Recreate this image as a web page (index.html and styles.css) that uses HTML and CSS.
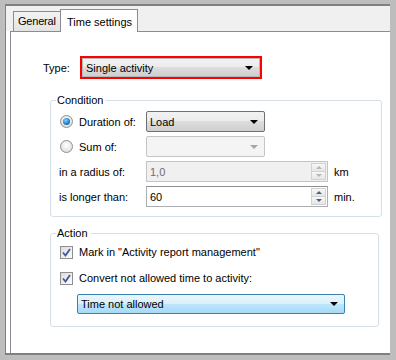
FILE: index.html
```html
<!DOCTYPE html>
<html lang="en">
<head>
    <meta charset="UTF-8">
    <title>Time settings</title>
    <link rel="stylesheet" href="styles.css">
</head>
<body>
    <div class="window">
        <div class="tabs">
            <div class="tab">General</div>
            <div class="tab active">Time settings</div>
        </div>
        <div class="panel">
            <div class="type-row">
                <span class="type-label">Type:</span>
                <div class="type-box">
                    <div class="combo type-combo">Single activity<span class="arrow"></span></div>
                </div>
            </div>

            <fieldset class="group condition">
                <legend>Condition</legend>
                <div class="cond-grid">
                    <label class="opt"><span class="radio on"></span>Duration of:</label>
                    <div class="combo small">Load<span class="arrow"></span></div>
                    <span></span>

                    <label class="opt"><span class="radio"></span>Sum of:</label>
                    <div class="combo small disabled"><span class="arrow"></span></div>
                    <span></span>

                    <span class="cap">in a radius of:</span>
                    <div class="spin disabled">1,0<span class="spin-btns"><span class="up"></span><span class="down"></span></span></div>
                    <span class="unit">km</span>

                    <span class="cap">is longer than:</span>
                    <div class="spin">60<span class="spin-btns"><span class="up"></span><span class="down"></span></span></div>
                    <span class="unit">min.</span>
                </div>
            </fieldset>

            <fieldset class="group action">
                <legend>Action</legend>
                <label class="check-row"><span class="check"><svg width="9" height="9" viewBox="0 0 9 9"><path d="M1 4.5 L3.5 7.5 L8 1" fill="none" stroke="#3f5a9a" stroke-width="1.8"/></svg></span>Mark in "Activity report management"</label>
                <label class="check-row"><span class="check"><svg width="9" height="9" viewBox="0 0 9 9"><path d="M1 4.5 L3.5 7.5 L8 1" fill="none" stroke="#3f5a9a" stroke-width="1.8"/></svg></span>Convert not allowed time to activity:</label>
                <div class="combo hot">Time not allowed<span class="arrow"></span></div>
            </fieldset>
        </div>
    </div>
</body>
</html>
```

FILE: styles.css
```css
body {
    margin: 0;
    background-color: #bdbdbd;
    font-family: "Liberation Sans", Arial, sans-serif;
    font-size: 11px;
    color: #000;
}
.window {
    margin: 4px 6px 0 5px;
    height: 347px;
    border-top: 2px solid #808080;
    border-left: 1px solid #808080;
    border-bottom: 2px solid #808080;
    background-color: #fff;
    display: flex;
    flex-direction: column;
}
.tabs {
    height: 25px;
    background-color: #f0f0f0;
    display: flex;
    align-items: flex-end;
    padding-left: 7px;
}
.tab {
    width: 42px;
    height: 19px;
    line-height: 19px;
    padding-left: 4px;
    border: 1px solid #898c95;
    border-bottom: none;
    border-right: none;
    background: linear-gradient(#f3f3f3, #e4e4e4);
    white-space: nowrap;
    letter-spacing: -0.2px;
}
.tab.active {
    position: relative;
    z-index: 1;
    width: 65px;
    height: 22px;
    line-height: 24px;
    margin-bottom: -1px;
    padding: 0 5px 0 6px;
    border-right: 1px solid #898c95;
    background: #fff;
    letter-spacing: 0;
}
.panel {
    flex: 1;
    margin-left: 4px;
    border-top: 1px solid #898c95;
    border-left: 1px solid #898c95;
}
.type-row {
    display: flex;
    align-items: center;
    margin: 24px 0 0 32px;
}
.type-label {
    width: 37px;
}
.type-box {
    width: 178px;
    height: 19px;
    border: 2px solid #f00;
}
.combo {
    display: flex;
    align-items: center;
    box-sizing: border-box;
    height: 21px;
    padding-left: 3px;
    border: 1px solid #707070;
    border-radius: 2px;
    background: linear-gradient(#f2f2f2 0%, #ebebeb 50%, #dddddd 50%, #cfcfcf 100%);
}
.type-combo {
    height: 19px;
    border-color: #b8b8b8;
    border-radius: 0;
}
.arrow {
    margin-left: auto;
    margin-right: 6px;
    width: 0;
    height: 0;
    border-left: 4px solid transparent;
    border-right: 4px solid transparent;
    border-top: 4px solid #000;
}
.combo.small {
    width: 119px;
}
.combo.disabled {
    border-color: #c4c4c4;
    background: #f4f4f4;
}
.combo.disabled .arrow {
    border-top-color: #a5a5a5;
}
.group {
    margin: 14px 8px 0 39px;
    padding: 4px 8px 9px 8px;
    border: 1px solid #d5dfe5;
    border-radius: 3px;
    min-inline-size: 0;
}
.group legend {
    margin-left: -3px;
    padding: 0 3px 0 1px;
    line-height: 14px;
}
.cond-grid {
    display: grid;
    grid-template-columns: 87px 182px auto;
    grid-auto-rows: 21px;
    row-gap: 4px;
    align-items: center;
}
.opt {
    display: flex;
    align-items: center;
    gap: 6px;
}
.radio {
    box-sizing: border-box;
    width: 13px;
    height: 13px;
    margin-left: 1px;
    border: 1px solid #8e8f8f;
    border-radius: 50%;
    background: radial-gradient(circle at 50% 40%, #fff 0%, #e6e6e6 60%, #cfcfcf 100%);
    display: flex;
    align-items: center;
    justify-content: center;
}
.radio.on::after {
    content: "";
    width: 7px;
    height: 7px;
    border-radius: 50%;
    background: radial-gradient(circle at 40% 35%, #8fd3ff 0%, #2d8fd6 45%, #164e86 100%);
}
.spin {
    display: flex;
    align-items: center;
    box-sizing: border-box;
    height: 21px;
    padding: 0 1px 0 3px;
    border: 1px solid #abadb3;
    border-top-color: #8e9096;
}
.spin.disabled {
    border-color: #c4c4c4;
    background: #f0f0f0;
    color: #6d6d6d;
}
.spin-btns {
    margin-left: auto;
    width: 15px;
    height: 17px;
    display: flex;
    flex-direction: column;
}
.spin-btns span {
    flex: 1;
    box-sizing: border-box;
    border: 1px solid #d2d2d2;
    background: linear-gradient(#f7f7f7, #e6e6e6);
    display: flex;
    align-items: center;
    justify-content: center;
}
.spin-btns .down {
    border-top: none;
}
.spin-btns .up::after,
.spin-btns .down::after {
    content: "";
    border-left: 3px solid transparent;
    border-right: 3px solid transparent;
}
.spin-btns .up::after {
    border-bottom: 3px solid #4d6185;
}
.spin-btns .down::after {
    border-top: 3px solid #4d6185;
}
.spin.disabled .spin-btns .up::after {
    border-bottom-color: #b5b5b5;
}
.spin.disabled .spin-btns .down::after {
    border-top-color: #b5b5b5;
}
.unit {
    padding-left: 6px;
}
.action {
    margin: 9px 11px 0 39px;
    padding-bottom: 12px;
}
.check-row {
    display: flex;
    align-items: center;
    gap: 6px;
    height: 16px;
    margin-bottom: 10px;
}
.check {
    box-sizing: border-box;
    width: 13px;
    height: 13px;
    margin-left: 1px;
    border: 1px solid #8f8f8f;
    background: linear-gradient(135deg, #dcdcdc, #fdfdfd);
    display: flex;
    align-items: center;
    justify-content: center;
}
.combo.hot {
    margin: -2px 0 0 18px;
    width: 268px;
    height: 20px;
    border-color: #3c7fb1;
    background: linear-gradient(#eaf6fd 0%, #d9f0fc 50%, #bee6fd 50%, #a7d9f5 100%);
}
```
